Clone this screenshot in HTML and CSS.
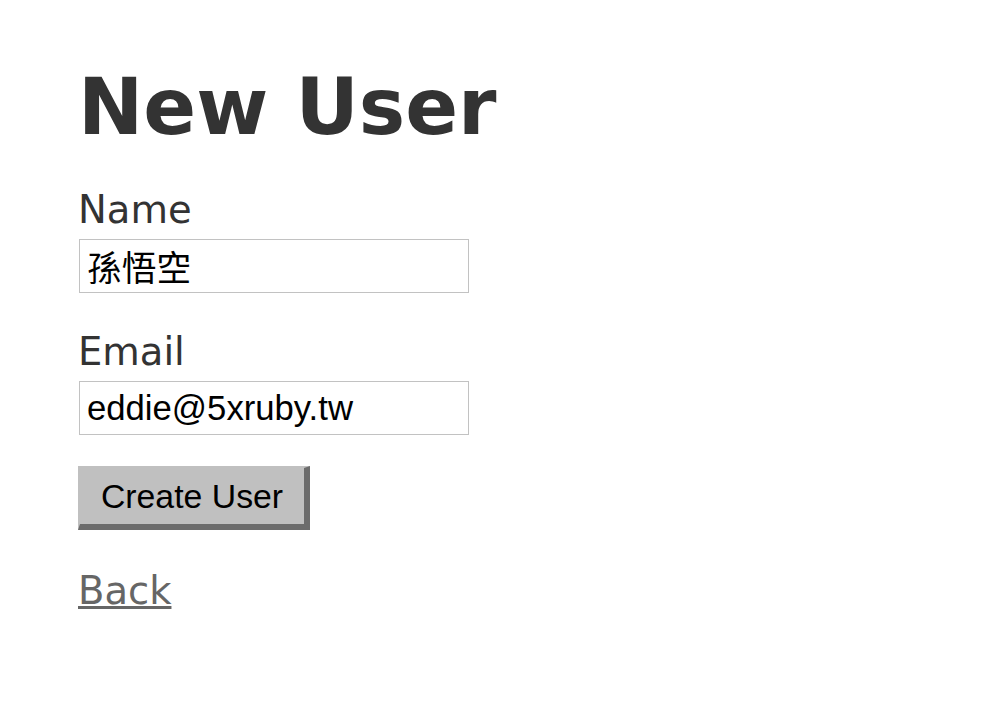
FILE: index.html
```html
<!DOCTYPE html>
<html>
<head>
<meta charset="utf-8">
<title>New User</title>
<link rel="stylesheet" href="styles.css">
</head>
<body>
<main class="page">
  <h1 class="title">New User</h1>
  <form class="user-form">
    <div class="field">
      <label class="label" for="user_name">Name</label>
      <input class="text-input" type="text" id="user_name" value="孫悟空">
    </div>
    <div class="field">
      <label class="label" for="user_email">Email</label>
      <input class="text-input" type="text" id="user_email" value="eddie@5xruby.tw">
    </div>
    <div class="actions">
      <button class="submit" type="button">Create User</button>
    </div>
  </form>
  <a class="back" href="#">Back</a>
</main>
</body>
</html>
```
FILE: styles.css
```css
html, body {
  margin: 0;
  padding: 0;
  background: #fff;
}
.page {
  padding: 62px 0 0 78px;
  color: #333;
  font-family: "DejaVu Sans", Verdana, sans-serif;
  display: flex;
  flex-direction: column;
  align-items: flex-start;
}
.title {
  margin: 0 0 31px 0;
  font-size: 78px;
  line-height: 90px;
  font-weight: bold;
}
.user-form {
  display: flex;
  flex-direction: column;
  align-items: flex-start;
}
.field {
  display: flex;
  flex-direction: column;
  align-items: flex-start;
  margin-bottom: 32px;
}
.label {
  font-size: 38.5px;
  line-height: 53px;
  margin-bottom: 3px;
}
.text-input {
  box-sizing: border-box;
  width: 390px;
  height: 54px;
  margin: 0 0 0 1px;
  padding: 0 7px;
  border: 1px solid #c2c2c2;
  background: #fff;
  color: #000;
  font-family: "Liberation Sans", Arial, "Noto Sans CJK TC", sans-serif;
  font-size: 34.7px;
  outline: none;
}
.actions {
  margin-top: -1px;
  margin-bottom: 34px;
}
.submit {
  box-sizing: border-box;
  width: 232px;
  height: 64px;
  margin: 0;
  padding: 2px 0 0 0;
  border-style: solid;
  border-width: 2px 6px 6px 2px;
  border-color: #c0c0c0 #6c6c6c #6c6c6c #c0c0c0;
  background: #c0c0c0;
  color: #000;
  font-family: "Liberation Sans", Arial, sans-serif;
  font-size: 33.8px;
  line-height: 1;
}
.back {
  font-size: 38.5px;
  line-height: 53px;
  color: #666;
  text-decoration: underline;
}
```
